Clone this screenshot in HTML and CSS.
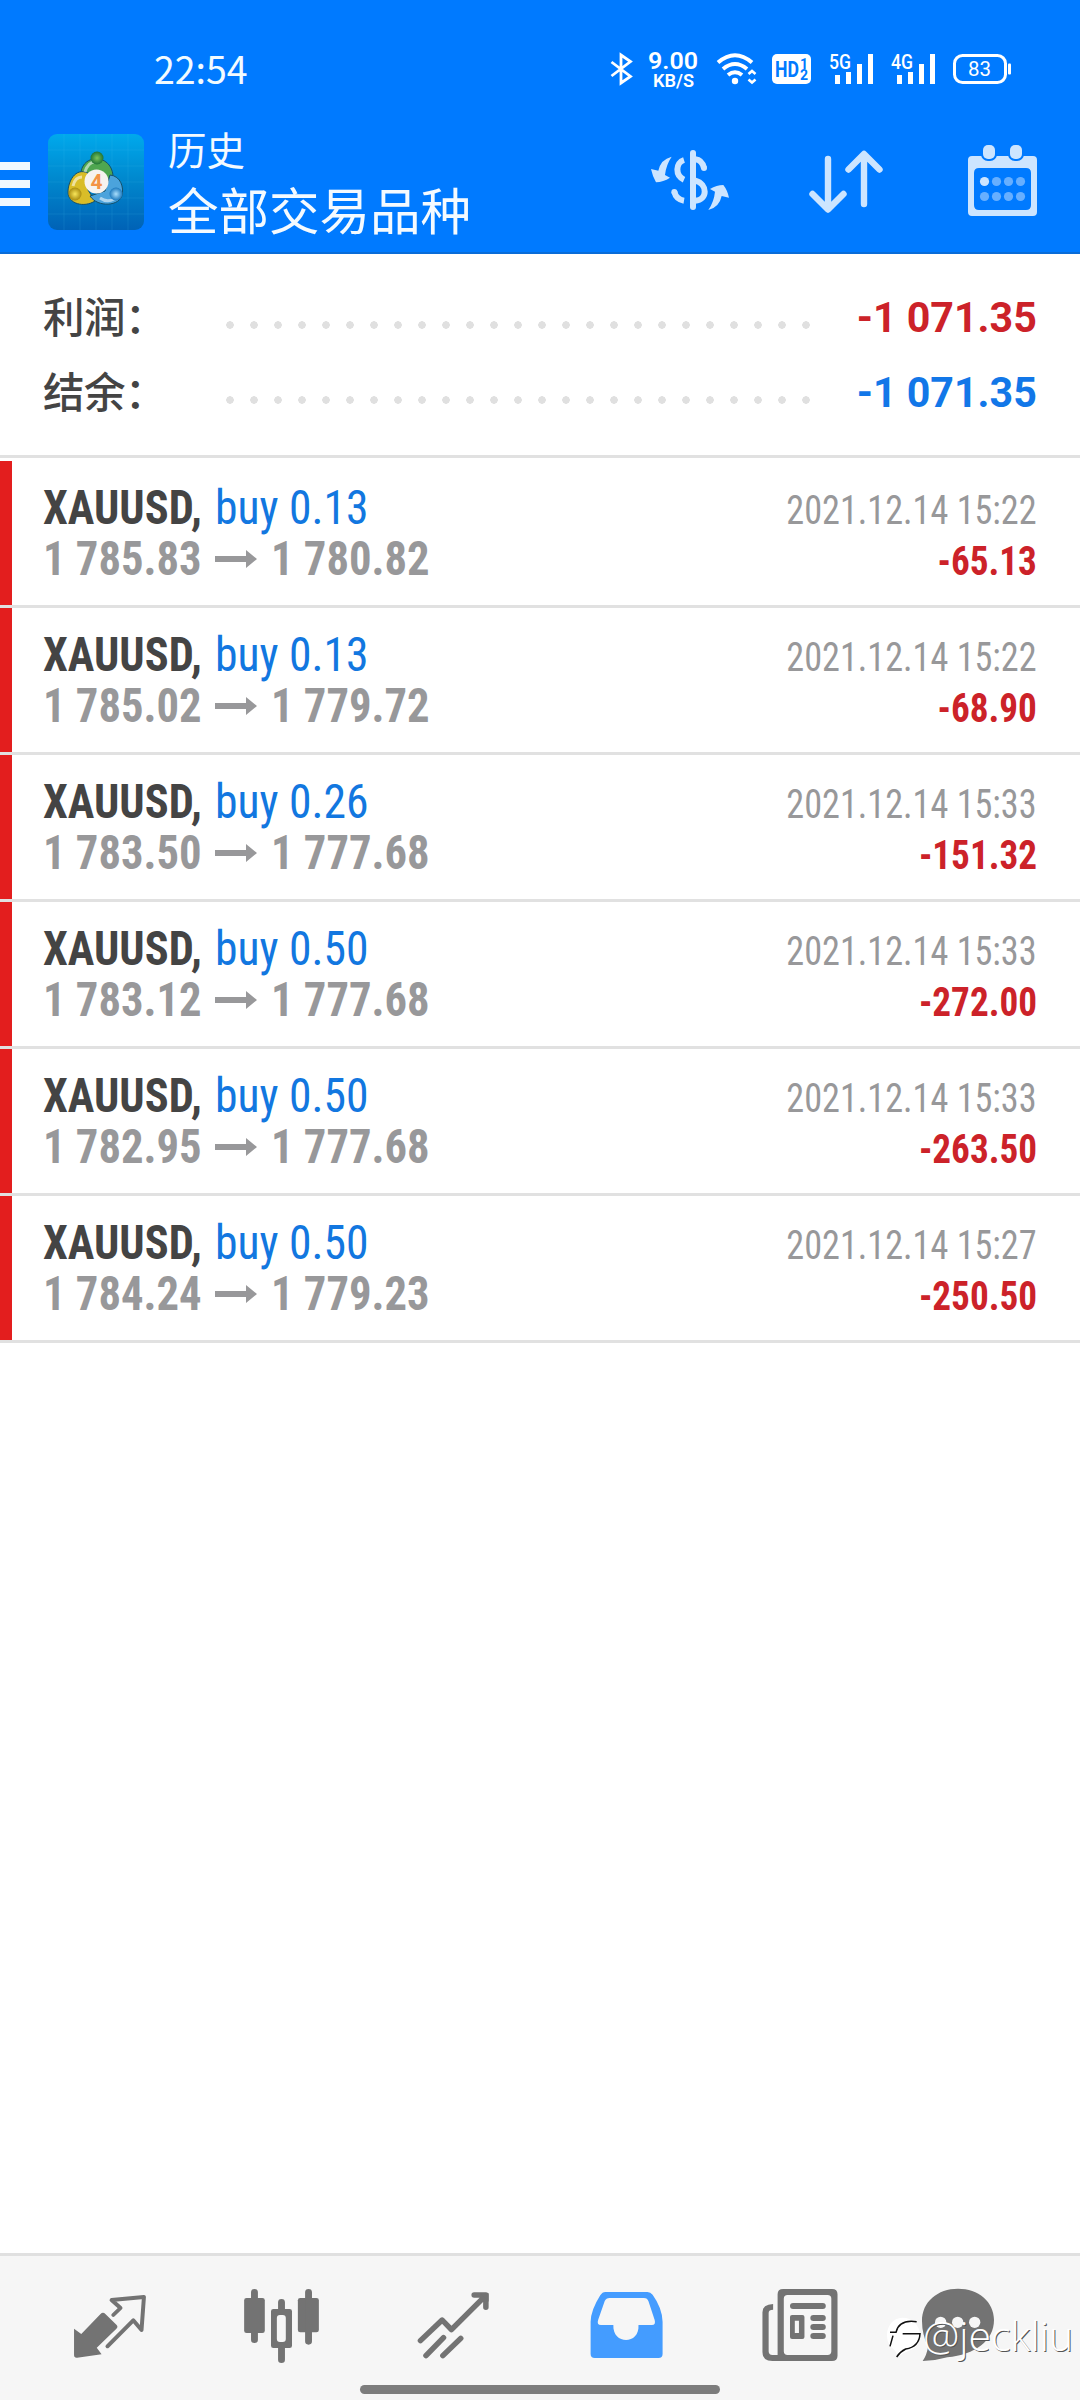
FILE: index.html
```html
<!DOCTYPE html>
<html lang="zh-CN">
<head>
<meta charset="utf-8">
<title>历史</title>
<link rel="stylesheet" href="styles.css">
</head>
<body>
<div class="screen">
  <header class="header">
    <div class="status">
      <span class="clock">22:54</span>
      <svg class="status-icons" width="420" height="44" viewBox="600 47 420 44">
        <path class="line" d="M611.5 62 L630.5 76.5 L621 83 V55 L630.5 61.5 L611.5 76" stroke-width="2.8"/>
        <text x="648" y="69" font-size="24" font-weight="600" textLength="50" lengthAdjust="spacingAndGlyphs">9.00</text>
        <text x="653" y="86.500" font-size="18" font-weight="600" textLength="41" lengthAdjust="spacingAndGlyphs">KB/S</text>
        <path class="line" d="M718 62.5 Q735 48 752 62.5 M723 69 Q735 59 747 69 M728 75 Q735 69.5 742 75" stroke-width="4"/>
        <circle cx="735" cy="81" r="3.2"/>
        <path class="line" d="M748.5 74 L752 71 L755.5 74 M748.5 79.5 L752 82.5 L755.5 79.5" stroke-width="2.6"/>
        <rect x="772" y="54" width="39" height="30" rx="5"/>
        <g class="knock">
          <text x="775" y="77" font-size="22" font-weight="700" textLength="24" lengthAdjust="spacingAndGlyphs">HD</text>
          <text x="800" y="68.500" font-size="14" font-weight="700">1</text>
          <text x="800" y="79.500" font-size="14" font-weight="700">2</text>
        </g>
        <text x="829" y="68.500" font-size="19.500" font-weight="500" textLength="22" lengthAdjust="spacingAndGlyphs">5G</text>
        <path d="M835 75h5v9h-5z M846 72h5v12h-5z M857 64h5v20h-5z M868 54h5v30h-5z"/>
        <text x="891" y="68.500" font-size="19.500" font-weight="500" textLength="22" lengthAdjust="spacingAndGlyphs">4G</text>
        <path d="M897 75h5v9h-5z M908 72h5v12h-5z M919 64h5v20h-5z M930 54h5v30h-5z"/>
        <rect class="line" x="954.500" y="55.500" width="51" height="27" rx="8" stroke-width="3"/>
        <rect x="1008" y="63.500" width="3" height="11" rx="1"/>
        <text x="968" y="76" font-size="21" font-weight="400" textLength="23" lengthAdjust="spacingAndGlyphs">83</text>
      </svg>
    </div>
    <div class="appbar">
      <svg class="menu" width="48" height="140" viewBox="0 114 48 140"><path d="M0 162h30v8H0z M0 180h30v8H0z M0 198h30v8H0z"/></svg>
      <svg class="logo" width="96" height="96" viewBox="0 0 96 96">
        <defs>
          <linearGradient id="bg" x1="0" y1="0" x2="0" y2="1"><stop offset="0" stop-color="#00a9ec"/><stop offset=".5" stop-color="#0086cc"/><stop offset="1" stop-color="#0062b6"/></linearGradient>
          <radialGradient id="gr"><stop offset="0" stop-color="#7cc45c"/><stop offset="1" stop-color="#1f7436"/></radialGradient>
          <radialGradient id="ye"><stop offset="0" stop-color="#f8e65a"/><stop offset="1" stop-color="#a98c10"/></radialGradient>
          <radialGradient id="bl"><stop offset="0" stop-color="#a9defc"/><stop offset="1" stop-color="#1c79be"/></radialGradient>
        </defs>
        <rect width="96" height="96" rx="9" fill="url(#bg)"/>
        <path d="M16 0v96M32 0v96M48 0v96M64 0v96M80 0v96M0 16h96M0 32h96M0 48h96M0 64h96M0 80h96" stroke="#4cc4f0" stroke-opacity=".14" stroke-width="1"/>
        <g stroke="#14506a" stroke-width="1">
          <path d="M33 44 C30 18 67 18 65 46 L57 55 L40 44Z" fill="#4fa650"/>
          <path d="M40 39 C27 33 20 48 20 58 C20 70 36 74 47 67 L40 56Z" fill="#d9bd28"/>
          <path d="M62 41 C73 42 76 54 74 61 C72 72 50 74 42 62 L57 57Z" fill="#4ba3dc"/>
        </g>
        <path d="M37 38 Q40 28 47 28 M25 52 Q27 43 34 43 M52 64 Q59 69 66 65" fill="none" stroke="#fff" stroke-opacity=".55" stroke-width="3"/>
        <circle cx="49" cy="24" r="6.500" fill="url(#gr)"/>
        <circle cx="27" cy="60" r="6.500" fill="url(#ye)"/>
        <circle cx="68" cy="60" r="6.500" fill="url(#bl)"/>
        <circle cx="48.500" cy="47.500" r="12" fill="#f6f3ef"/>
        <text x="42.500" y="55" font-size="21" font-weight="700" fill="#f39445" textLength="12" lengthAdjust="spacingAndGlyphs">4</text>
      </svg>
      <div class="titles">
        <div class="subtitle">历史</div>
        <h1 class="title">全部交易品种</h1>
      </div>
      <svg class="action" width="156" height="140" viewBox="612 114 156 140">
        <g transform="translate(640 130) scale(.33333)">
          <path d="M159 69V231" fill="none" stroke="#cde5ff" stroke-width="18" stroke-linecap="round"/>
          <path d="M132 90C106 98 105 137 132 149M103 185Q108 208 132 212" fill="none" stroke="#cde5ff" stroke-width="18"/>
          <path d="M166 88Q186 90 192 114M166 152C204 162 203 210 166 212" fill="none" stroke="#cde5ff" stroke-width="18"/>
          <circle cx="103" cy="186" r="9"/><circle cx="192" cy="114" r="9"/>
          <path d="M95 80Q62 88 55 122L33 117Q38 140 48 157Q70 156 90 143L75 135Q78 105 95 80ZM205 240Q238 232 245 198L267 203Q262 180 250 165Q230 165 210 177L225 185Q222 215 205 240Z"/>
        </g>
      </svg>
      <svg class="action" width="156" height="140" viewBox="768 114 156 140">
        <path d="M828 159V208M812.500 194L828 209.500L843.500 194M864 204V155M848.500 169.500L864 154L879.500 169.500" fill="none" stroke="#cde5ff" stroke-width="6.400" stroke-linecap="round" stroke-linejoin="round"/>
      </svg>
      <svg class="action" width="156" height="140" viewBox="924 114 156 140">
        <path fill-rule="evenodd" d="M972 156H1033Q1037 156 1037 160V212Q1037 216 1033 216H972Q968 216 968 212V160Q968 156 972 156ZM979 168Q974 168 974 173V205Q974 210 979 210H1026Q1031 210 1031 205V173Q1031 168 1026 168Z"/>
        <g stroke="#007aff" stroke-width="4" paint-order="stroke"><rect x="983" y="145" width="12" height="14" rx="5"/><rect x="1010" y="145" width="12" height="14" rx="5"/></g>
        <circle cx="984.500" cy="181.500" r="4.600"/>
        <g opacity=".5"><circle cx="996.500" cy="181.500" r="4.600"/><circle cx="1008.500" cy="181.500" r="4.600"/><circle cx="1020.500" cy="181.500" r="4.600"/><circle cx="984.500" cy="196.500" r="4.600"/><circle cx="996.500" cy="196.500" r="4.600"/><circle cx="1008.500" cy="196.500" r="4.600"/><circle cx="1020.500" cy="196.500" r="4.600"/></g>
      </svg>
    </div>
  </header>

  <section class="summary">
    <div class="sum-row"><span class="sum-label">利润：</span><span class="dots"></span><span class="sum-value loss">-1 071.35</span></div>
    <div class="sum-row"><span class="sum-label">结余：</span><span class="dots"></span><span class="sum-value balance">-1 071.35</span></div>
  </section>

  <main class="deals">
    <article class="deal"><div class="line1"><b class="symbol">XAUUSD,</b><span class="side">buy 0.13</span><time class="time">2021.12.14 15:22</time></div><div class="line2"><span class="price">1 785.83</span><svg class="arrow" width="42" height="18"><path d="M0 6h31V0L42 9L31 18V12H0z"/></svg><span class="price">1 780.82</span><span class="profit">-65.13</span></div></article>
    <article class="deal"><div class="line1"><b class="symbol">XAUUSD,</b><span class="side">buy 0.13</span><time class="time">2021.12.14 15:22</time></div><div class="line2"><span class="price">1 785.02</span><svg class="arrow" width="42" height="18"><path d="M0 6h31V0L42 9L31 18V12H0z"/></svg><span class="price">1 779.72</span><span class="profit">-68.90</span></div></article>
    <article class="deal"><div class="line1"><b class="symbol">XAUUSD,</b><span class="side">buy 0.26</span><time class="time">2021.12.14 15:33</time></div><div class="line2"><span class="price">1 783.50</span><svg class="arrow" width="42" height="18"><path d="M0 6h31V0L42 9L31 18V12H0z"/></svg><span class="price">1 777.68</span><span class="profit">-151.32</span></div></article>
    <article class="deal"><div class="line1"><b class="symbol">XAUUSD,</b><span class="side">buy 0.50</span><time class="time">2021.12.14 15:33</time></div><div class="line2"><span class="price">1 783.12</span><svg class="arrow" width="42" height="18"><path d="M0 6h31V0L42 9L31 18V12H0z"/></svg><span class="price">1 777.68</span><span class="profit">-272.00</span></div></article>
    <article class="deal"><div class="line1"><b class="symbol">XAUUSD,</b><span class="side">buy 0.50</span><time class="time">2021.12.14 15:33</time></div><div class="line2"><span class="price">1 782.95</span><svg class="arrow" width="42" height="18"><path d="M0 6h31V0L42 9L31 18V12H0z"/></svg><span class="price">1 777.68</span><span class="profit">-263.50</span></div></article>
    <article class="deal"><div class="line1"><b class="symbol">XAUUSD,</b><span class="side">buy 0.50</span><time class="time">2021.12.14 15:27</time></div><div class="line2"><span class="price">1 784.24</span><svg class="arrow" width="42" height="18"><path d="M0 6h31V0L42 9L31 18V12H0z"/></svg><span class="price">1 779.23</span><span class="profit">-250.50</span></div></article>
  </main>

  <nav class="nav">
    <svg class="tab" viewBox="24 2256 172 144"><g transform="translate(0 2240) scale(.34435 .33333)">
      <path d="M215 266L236 282L292 222Q299 215 306 222L338 254Q344 260 338 266L281 323L295 343L224 353Q215 354 215 345Z"/>
      <path class="ln" d="M329 225L350 204L324 180L418 171L411 270L387 241L312 319" stroke-width="11.500"/></g></svg>
    <svg class="tab" viewBox="196 2256 172 144"><g transform="translate(0 2240) scale(.34435 .33333)">
      <rect x="709" y="174" width="60" height="105" rx="7"/><rect x="865" y="174" width="61" height="103" rx="7"/>
      <path class="ln" d="M739 157V299M896 157V304M817.500 187V212M817.500 318V359" stroke-width="20"/>
      <path fill-rule="evenodd" d="M794 207H841Q848 207 848 214V317Q848 324 841 324H794Q787 324 787 317V214Q787 207 794 207ZM813 225Q804 225 804 234V297Q804 306 813 306H821Q830 306 830 297V234Q830 225 821 225Z"/></g></svg>
    <svg class="tab" viewBox="368 2256 172 144"><g transform="translate(0 2240) scale(.34435 .33333)">
      <path class="ln" d="M1221 302L1284 240L1311 269L1405 172M1377 165H1411V202M1237 347L1288 293M1286 347L1338 295" stroke-width="16"/><path d="M1394 160H1419V185Z"/></g></svg>
    <svg class="tab on" viewBox="540 2256 172 144"><g transform="translate(540 2240) scale(.34435 .33333)">
      <path fill-rule="evenodd" d="M190 156H312Q321 156 327 164Q355 204 356 245V342Q356 354 344 354H159Q147 354 147 342V245Q148 210 175 166Q181 156 190 156ZM202 174Q192 174 188 183L169 239Q164 255 177 255H213C210 315 290 315 286 255H325Q337 255 333 240L315 184Q312 174 302 174Z"/></g></svg>
    <svg class="tab" viewBox="712 2256 172 144"><g transform="translate(540 2240) scale(.34435 .33333)">
      <path fill-rule="evenodd" d="M706 147H848Q864 147 864 163V347Q864 363 848 363H675Q646 363 646 336V217Q646 193 677 192V209Q664 209 664 219V334Q664 345 675 345H690V163Q690 147 706 147ZM719 165Q708 165 708 176V334Q708 345 719 345H835Q846 345 846 334V176Q846 165 835 165Z"/>
      <path fill-rule="evenodd" d="M732 225H762Q768 225 768 231V291Q768 297 762 297H732Q726 297 726 291V231Q726 225 732 225ZM740 242V279H752V242Z"/>
      <path class="ln" d="M735 198H821M794 234H821M794 261H821M794 288H821" stroke-width="18"/></g></svg>
    <svg class="tab" viewBox="884 2256 172 144"><g transform="translate(860 2270) scale(.33333)">
      <path d="M294 56C355 56 402 95 402 150C402 212 345 254 262 262Q225 273 188 273Q200 256 204 231Q186 192 186 153C186 95 233 56 294 56Z"/>
      <g fill="#f6f6f6"><circle cx="242" cy="157" r="17"/><circle cx="293" cy="157" r="17"/><circle cx="344" cy="157" r="17"/></g></g></svg>
    <div class="home-indicator"></div>
    <div class="watermark">
      <svg width="38" height="46" viewBox="0 0 114 138"><path d="M55 8C85 8 108 30 108 63C108 85 95 100 80 105Q60 112 38 128Q42 110 20 95C-5 60 15 8 55 8Z" fill="#fff"/><path d="M18 94L27 62M18 52H36Q45 12 98 20M56 56H108Q106 95 65 102Q48 110 38 126" fill="none" stroke="#111" stroke-width="4.500"/></svg>
      <span class="handle">@jeckliu</span>
    </div>
  </nav>
</div>
</body>
</html>
```
FILE: styles.css
```css
* { box-sizing: border-box; }
body { margin: 0; background: #fff; font-family: Roboto, "Noto Sans CJK SC", sans-serif; }
.screen { width: 1080px; height: 2400px; display: flex; flex-direction: column; overflow: hidden; }

.header { height: 254px; background: #007aff; border-bottom: 2px solid #0a6cd8; }
.status { height: 138px; margin-bottom: -24px; display: flex; align-items: center; justify-content: space-between; padding: 0 60px 0 154px; }
.clock { margin-top: -3px; font-family: "Noto Sans CJK SC", sans-serif; font-size: 37.5px; line-height: 44px; color: #f2fbff; }
.status-icons { fill: #fff; font-family: Roboto, sans-serif; }
.line { fill: none; stroke: #fff; }
.knock { fill: #007aff; }

.appbar { height: 140px; display: flex; align-items: center; }
.menu { fill: #f0f8ff; }
.logo { margin-top: -4px; }
.titles { flex: 1; padding: 0 0 13px 24px; color: #f4faff; font-family: "Noto Sans CJK SC", sans-serif; }
.subtitle { font-size: 38.5px; line-height: 60px; }
.title { margin: 0; font-size: 50.5px; line-height: 60px; font-weight: 400; white-space: nowrap; }
.action { fill: #cde5ff; flex: none; }

.summary { height: 204px; padding: 26px 43px 0; border-bottom: 3px solid #e1e1e1; }
.sum-row { height: 75px; display: flex; align-items: center; }
.sum-label { width: 181px; margin-top: -5px; font: 500 41.5px/75px "Noto Sans CJK SC", sans-serif; letter-spacing: -0.5px; color: #444; white-space: nowrap; }
.dots { width: 600px; height: 8px; margin-top: 15px; background: radial-gradient(circle at 6px 4px, #e0e0e0 3.500px, transparent 4px) 0 0 / 24px 8px; }
.sum-value { margin-left: auto; font-size: 42px; font-weight: 700; transform: scaleX(.98); transform-origin: right; }
.loss { color: #cc2229; }
.balance { color: #1277e8; }

.deals { flex: 1; padding-top: 3px; }
.deal { height: 147px; padding: 21px 43px 0 31px; border-left: 12px solid #e31e1e; position: relative; font-family: "Roboto Condensed", sans-serif; white-space: nowrap; }
.deal::after { content: ""; position: absolute; left: -12px; right: 0; bottom: 0; height: 3px; background: #e1e1e1; }
.line1, .line2 { height: 51px; line-height: 51px; display: flex; align-items: baseline; }
.symbol, .side, .price { font-size: 48px; transform-origin: left; }
.symbol { width: 172px; color: #444; transform: scaleX(.925); }
.side { color: #1277e0; transform: scaleX(.95); }
.price { width: 172px; font-weight: 700; color: #98989a; transform: scaleX(.93); }
.arrow { align-self: center; margin-right: 14px; fill: #98989a; }
.time, .profit { margin-left: auto; font-size: 40px; transform-origin: right; }
.time { color: #98989a; transform: scaleX(.905); }
.profit { font-weight: 700; color: #cc2229; transform: scaleX(.93); }

.nav { height: 147px; flex: none; border-top: 3px solid #e0e0e0; background: #f6f6f6; padding: 0 24px; display: flex; position: relative; }
.tab { width: 172px; height: 144px; flex: none; fill: #737373; stroke: none; overflow: visible; }
.ln { fill: none; stroke: #737373; stroke-linecap: round; stroke-linejoin: round; }
.on { fill: #449cff; }
.home-indicator { position: absolute; left: 360px; bottom: 6px; width: 360px; height: 9px; border-radius: 5px; background: #7d7d7d; }
.watermark { position: absolute; left: 884px; top: 58px; height: 48px; display: flex; align-items: center; }
.handle { margin: -6px 0 0 1px; font: 300 41px/48px "Open Sans", sans-serif; color: #fff; text-shadow: 1px 1px 0 #555; }
```
